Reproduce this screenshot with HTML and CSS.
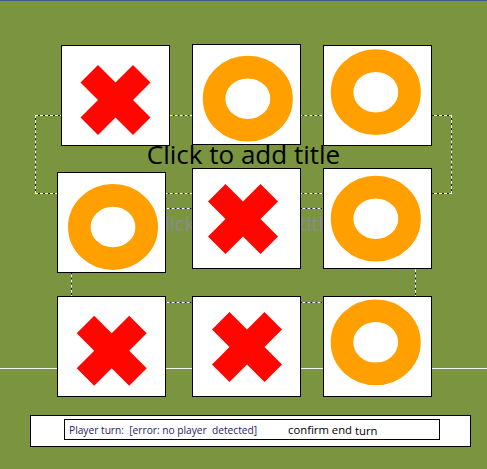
FILE: index.html
```html
<!DOCTYPE html>
<html>
<head>
<meta charset="utf-8">
<link rel="stylesheet" href="styles.css">
</head>
<body>
<div class="slide">
  <div class="ph ph-title"><span class="title-text">Click to add title</span></div>
  <div class="ph ph-sub"><span class="sub-text">Click to add subtitle</span></div>
  <div class="rule"></div>

  <div class="board">
    <div class="card c1">
      <svg class="mark" viewBox="0 0 107 99" width="107" height="99"><polygon class="x" transform="translate(18.5 19)" points="0,17.5 17.5,0 35,17.5 52.5,0 70,17.5 52.5,35 70,52.5 52.5,70 35,52.5 17.5,70 0,52.5 17.5,35"/></svg>
    </div>
    <div class="card c2">
      <svg class="mark" viewBox="0 0 107 99" width="107" height="99"><ellipse class="o" cx="54.8" cy="53.7" rx="33.7" ry="31.6"/></svg>
    </div>
    <div class="card c3">
      <svg class="mark" viewBox="0 0 107 99" width="107" height="99"><ellipse class="o" cx="51.8" cy="46.2" rx="33.7" ry="31.6"/></svg>
    </div>

    <div class="card c4">
      <svg class="mark" viewBox="0 0 107 99" width="107" height="99"><ellipse class="o" cx="55" cy="54" rx="33.7" ry="31.6"/></svg>
    </div>
    <div class="card c5">
      <svg class="mark" viewBox="0 0 107 99" width="107" height="99"><polygon class="x" transform="translate(15 15)" points="0,17.5 17.5,0 35,17.5 52.5,0 70,17.5 52.5,35 70,52.5 52.5,70 35,52.5 17.5,70 0,52.5 17.5,35"/></svg>
    </div>
    <div class="card c6">
      <svg class="mark" viewBox="0 0 107 99" width="107" height="99"><ellipse class="o" cx="51.8" cy="49.7" rx="33.7" ry="31.6"/></svg>
    </div>

    <div class="card c7">
      <svg class="mark" viewBox="0 0 107 99" width="107" height="99"><polygon class="x" transform="translate(18.7 18.7)" points="0,17.5 17.5,0 35,17.5 52.5,0 70,17.5 52.5,35 70,52.5 52.5,70 35,52.5 17.5,70 0,52.5 17.5,35"/></svg>
    </div>
    <div class="card c8">
      <svg class="mark" viewBox="0 0 107 99" width="107" height="99"><polygon class="x" transform="translate(19 15)" points="0,17.5 17.5,0 35,17.5 52.5,0 70,17.5 52.5,35 70,52.5 52.5,70 35,52.5 17.5,70 0,52.5 17.5,35"/></svg>
    </div>
    <div class="card c9">
      <svg class="mark" viewBox="0 0 107 99" width="107" height="99"><ellipse class="o" cx="51.7" cy="45.3" rx="33.7" ry="31.6"/></svg>
    </div>
  </div>

  <div class="status">
    <div class="status-inner">
      <span class="player">Player turn:  [error: no player  detected]</span>
      <span class="confirm">confirm end <span class="turn">turn</span></span>
    </div>
  </div>
</div>
</body>
</html>
```

FILE: styles.css
```css
html, body {
  margin: 0;
  padding: 0;
}

body {
  background: #7a943f;
  width: 487px;
  height: 469px;
  overflow: hidden;
  font-family: "Open Sans", "Liberation Sans", sans-serif;
}

.slide {
  position: relative;
  width: 487px;
  height: 469px;
  box-sizing: border-box;
  border-top: 1px solid #3b5d8d;
  padding-top: 44px;
}

/* placeholder frames (behind the board) */
.ph {
  position: absolute;
  box-sizing: border-box;
  border: 1px solid #1a1a1a;
  display: flex;
  justify-content: center;
  z-index: 0;
}

.ph::before {
  content: "";
  position: absolute;
  inset: -1px;
  border: 1px dashed #ffffff;
}

.ph-title {
  left: 35px;
  top: 114px;
  width: 417px;
  height: 79px;
  align-items: center;
}

.title-text {
  font-size: 26px;
  color: #000;
  line-height: 1;
  margin-top: -1px;
}

.ph-sub {
  left: 71px;
  top: 207px;
  width: 345px;
  height: 95px;
  align-items: flex-start;
}

.sub-text {
  font-size: 20px;
  color: #8b8b8f;
  line-height: 1;
  margin-top: 5px;
}

.rule {
  position: absolute;
  left: 0;
  right: 0;
  top: 367px;
  height: 1px;
  background: #f2f2f2;
  z-index: 0;
}

/* game board */
.board {
  position: relative;
  z-index: 1;
  margin-left: 61px;
  display: grid;
  grid-template-columns: repeat(3, 109px);
  grid-template-rows: 101px 101px 106px;
  column-gap: 22px;
  row-gap: 22px;
}

.card {
  box-sizing: border-box;
  width: 109px;
  height: 101px;
  background: #ffffff;
  border: 1px solid #000;
}

.mark {
  display: block;
}

.x {
  fill: #ff0600;
}

.o {
  fill: none;
  stroke: #ffa000;
  stroke-width: 22.6;
}

.c2 { margin-top: -1px; }
.c4 { margin-top: 4px; margin-left: -4px; }
.c7 { margin-left: -4px; }
.c7, .c8, .c9 { align-self: end; }

/* status bar */
.status {
  box-sizing: border-box;
  margin: 18px 0 0 30px;
  width: 441px;
  height: 32px;
  background: #fff;
  border: 1px solid #000;
  padding: 3px 0 0 33px;
}

.status-inner {
  box-sizing: border-box;
  width: 376px;
  height: 21px;
  border: 1px solid #000;
  padding-left: 4px;
  display: grid;
  grid-template-columns: 219px auto;
  align-items: center;
}

.player {
  white-space: pre;
  font-size: 10.2px;
  color: #1c1c66;
}

.confirm {
  white-space: pre;
  font-size: 11.3px;
  color: #000;
}

.turn {
  position: relative;
  top: 1px;
}
```
